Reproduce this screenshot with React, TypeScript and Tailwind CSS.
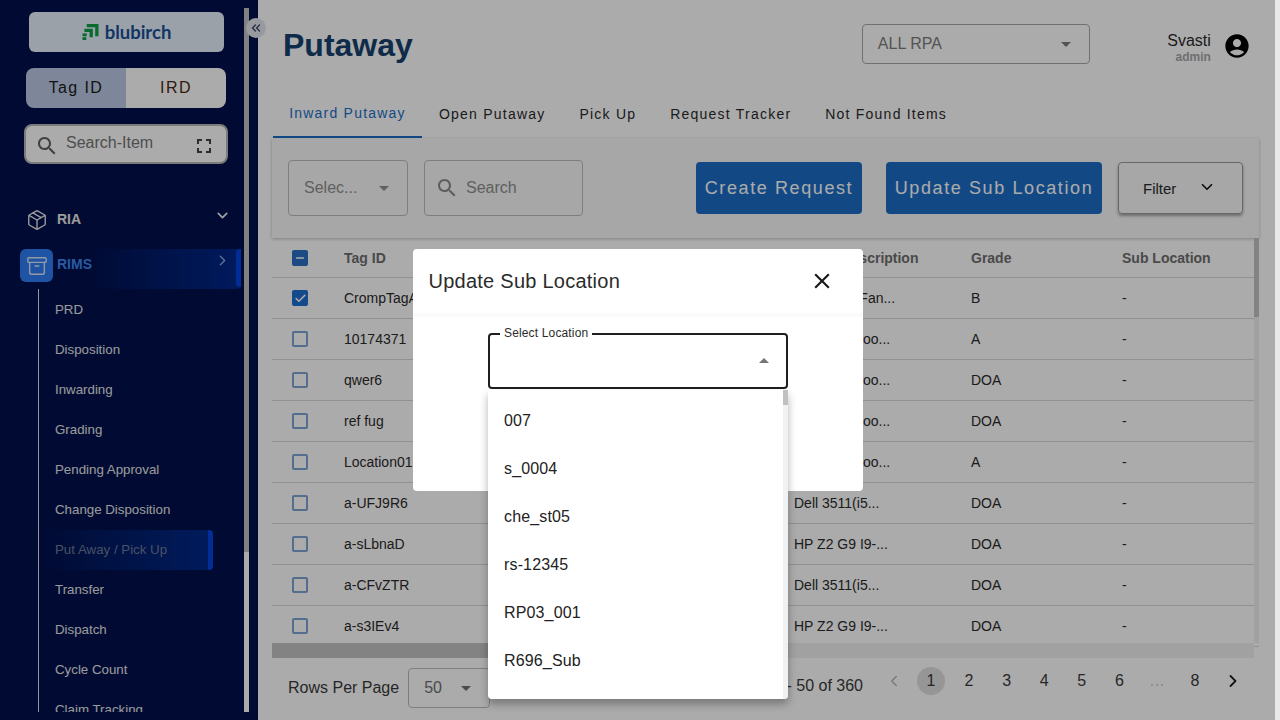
import React from "react";
import { Package, Archive, ChevronDown, ChevronRight, ChevronLeft, ChevronsLeft, Check, Minus } from "lucide-react";

const subs = ["PRD", "Disposition", "Inwarding", "Grading", "Pending Approval", "Change Disposition", "Put Away / Pick Up", "Transfer", "Dispatch", "Cycle Count", "Claim Tracking"];
const rows = [
  ["CrompTagA01", "Crompton Fan...", "B", true],
  ["10174371", "Wooden Stoo...", "A", false],
  ["qwer6", "Wooden Stoo...", "DOA", false],
  ["ref fug", "Wooden Stoo...", "DOA", false],
  ["Location01", "Wooden Stoo...", "A", false],
  ["a-UFJ9R6", "Dell 3511(i5...", "DOA", false],
  ["a-sLbnaD", "HP Z2 G9 I9-...", "DOA", false],
  ["a-CFvZTR", "Dell 3511(i5...", "DOA", false],
  ["a-s3IEv4", "HP Z2 G9 I9-...", "DOA", false],
] as const;
const tabs = ["Inward Putaway", "Open Putaway", "Pick Up", "Request Tracker", "Not Found Items"];
const options = ["007", "s_0004", "che_st05", "rs-12345", "RP03_001", "R696_Sub"];

function Caret({ up = false }: { up?: boolean }) {
  return (
    <svg width="24" height="24" viewBox="0 0 24 24" className="shrink-0" fill="currentColor">
      <path d={up ? "M7 14l5-5 5 5z" : "M7 10l5 5 5-5z"} />
    </svg>
  );
}

function SearchIcon({ className }: { className: string }) {
  return (
    <svg width="24" height="24" viewBox="0 0 24 24" className={className} fill="currentColor">
      <path d="M15.5 14h-.79l-.28-.27C15.41 12.59 16 11.11 16 9.5 16 5.91 13.09 3 9.5 3S3 5.91 3 9.5 5.91 16 9.5 16c1.61 0 3.09-.59 4.23-1.57l.27.28v.79l5 4.99L20.49 19l-4.99-5zm-6 0C7.01 14 5 11.99 5 9.5S7.01 5 9.5 5 14 7.01 14 9.5 11.99 14 9.5 14z" />
    </svg>
  );
}

function Sidebar() {
  return (
    <aside className="w-[258px] h-full shrink-0 bg-[#00104d] relative flex">
      <div className="w-[244px] h-[712px] flex flex-col overflow-hidden">
        <div className="ml-[29px] mt-3 w-[195px] h-10 shrink-0 rounded-md bg-[#e6f1fb] flex items-center justify-center gap-[6px]">
          <svg width="17" height="16" viewBox="0 0 18 17" fill="#0d9e45">
            <path d="M5 0h12.5v13h-3.5V3.5H5z" />
            <path d="M2.5 5h9v9H8V8.5H2.5z" />
            <rect x="0.5" y="10" width="4.5" height="3" />
            <rect x="0.5" y="14" width="4" height="3" />
          </svg>
          <span className="font-['Lato',sans-serif] text-[18.5px] font-bold text-[#1a5096] leading-none">blubirch</span>
        </div>
        <div className="ml-[26px] mt-4 w-[200px] h-10 shrink-0 rounded-lg overflow-hidden flex text-base tracking-[1.4px]">
          <div className="w-[100px] bg-[#bccae6] text-[#1a1a1a] flex items-center justify-center">Tag ID</div>
          <div className="w-[100px] bg-white text-[#4a2a10] flex items-center justify-center">IRD</div>
        </div>
        <div className="ml-[24px] mt-4 w-[204px] h-10 shrink-0 rounded-lg bg-white border-2 border-[#b8b8b8] flex items-center pl-[9px] pr-[10px] text-[#757575]">
          <SearchIcon className="shrink-0 mt-[4px] text-[#5f5f5f]" />
          <span className="ml-[7px] text-base flex-1 -mt-[2px]">Search-Item</span>
          <svg width="24" height="24" viewBox="0 0 24 24" fill="#444" className="mt-[4px]">
            <path d="M7 14H5v5h5v-2H7v-3zm-2-4h2V7h3V5H5v5zm12 7h-3v2h5v-5h-2v3zM14 5v2h3v3h2V5h-5z" />
          </svg>
        </div>
        <div className="mt-[35px] pl-[20px] mr-[3px] flex flex-col shrink-0">
          <div className="h-10 flex items-center pl-[7px]">
            <Package size={22} strokeWidth={1.5} className="text-[#e8e8e8] -ml-[1px] -mr-[1px] mt-[1px]" />
            <span className="ml-[10px] text-sm font-bold text-[#e8e8e8] -mt-px">RIA</span>
            <ChevronDown size={17} strokeWidth={2.5} className="ml-auto mr-[10px] mb-[7px] text-[#e8e8e8]" />
          </div>
          <div className="mt-[10px] h-10 flex items-start relative bg-gradient-to-r from-transparent from-[30%] to-[#00288c] rounded-r">
            <div className="w-[33px] h-[33px] rounded-md bg-[#2f7df5] flex items-center justify-center">
              <Archive size={22} strokeWidth={1.5} className="text-[#dde6f5]" />
            </div>
            <span className="ml-1 text-sm font-bold leading-[31px] text-[#3f86f0]">RIMS</span>
            <ChevronRight size={17} strokeWidth={2} className="ml-auto mr-[10px] mt-[3px] text-[#8aa9e0]" />
            <div className="absolute right-0 top-0 bottom-[2px] w-[5px] rounded-l bg-[#0544e0]" />
          </div>
          <div className="ml-[18px] pt-[1px] border-l border-[#e0e0e0] flex flex-col">
            {subs.map((s) => (
              <div key={s} className="h-10 pl-4 flex items-center text-[13.3px] relative">
                {s === "Put Away / Pick Up" ? (
                  <>
                    <div className="absolute left-[2px] top-0 w-[171px] h-10 rounded-r bg-gradient-to-r from-transparent to-[#002a8a]" />
                    <div className="absolute left-[169px] top-0 w-[5px] h-10 rounded-r bg-[#0544e0]" />
                    <span className="relative text-[#6f7a96]">{s}</span>
                  </>
                ) : (
                  <span className="text-[#e6e6e6]">{s}</span>
                )}
              </div>
            ))}
          </div>
        </div>
      </div>
      <div className="w-[5px] h-[704px] mt-2 bg-white">
        <div className="w-full h-[544px] bg-[#c0c0c0]" />
      </div>
      <div className="absolute left-[246px] top-[18px] w-[20px] h-[20px] rounded-full bg-[#e3e6ee] flex items-center justify-center">
        <ChevronsLeft size={14} strokeWidth={2.5} className="text-[#43506b]" />
      </div>
    </aside>
  );
}

function Table() {
  return (
    <div className="ml-[14px] mr-[16px] h-[421px] shrink-0 flex flex-col relative overflow-hidden">
      <div className="h-10 shrink-0 flex items-center border-b border-[#d9d9d9] text-sm font-bold text-[#6e6e6e]">
        <div className="w-[72px] pl-5 shrink-0">
          <div className="w-4 h-4 rounded-[2px] bg-[#2a6fc4] flex items-center justify-center">
            <Minus size={12} strokeWidth={3} className="text-white" />
          </div>
        </div>
        <div className="w-[450px] shrink-0">Tag ID</div>
        <div className="w-[177px] shrink-0">Article Description</div>
        <div className="w-[151px] shrink-0">Grade</div>
        <div>Sub Location</div>
      </div>
      {rows.map(([tag, desc, grade, checked]) => (
        <div key={tag} className="h-[41px] shrink-0 flex items-center border-b border-[#d9d9d9] text-sm text-[#2b2b2b]">
          <div className="w-[72px] pl-5 shrink-0">
            {checked ? (
              <div className="w-4 h-4 rounded-[2px] bg-[#1c6fd0] flex items-center justify-center">
                <Check size={13} strokeWidth={3} className="text-white" />
              </div>
            ) : (
              <div className="w-4 h-4 rounded-[2px] border-2 border-[#7ba3d4]" />
            )}
          </div>
          <div className="w-[450px] shrink-0">{tag}</div>
          <div className="w-[177px] shrink-0">{desc}</div>
          <div className="w-[151px] shrink-0">{grade}</div>
          <div>-</div>
        </div>
      ))}
      <div className="absolute left-0 right-[5px] bottom-[1px] h-[15px] bg-[#f1f1f1]">
        <div className="w-[500px] h-full bg-[#c4c4c4]" />
      </div>
      <div className="absolute right-0 top-0 h-[405px] w-[5px] bg-[#f1f1f1]">
        <div className="w-full h-[79px] bg-[#c4c4c4]" />
      </div>
    </div>
  );
}

function Main() {
  return (
    <main className="flex-1 min-w-0 h-full flex flex-col bg-white">
      <header className="h-[89px] shrink-0 flex items-start">
        <h1 className="ml-[25px] mt-[25px] text-[32px] leading-10 font-bold text-[#17416f]">Putaway</h1>
        <div className="ml-[449px] mt-[24px] w-[228px] h-10 rounded border border-[#a8a8a8] flex items-center pl-[15px] pr-[11px] text-base text-[#7c7c7c]">
          <span className="flex-1 -mt-[1px]">ALL RPA</span>
          <Caret />
        </div>
        <div className="ml-[77px] mt-[33px] w-[44px] text-right">
          <div className="text-base leading-4 text-[#2b2b2b] whitespace-nowrap">Svasti</div>
          <div className="text-xs leading-3 font-bold text-[#a6a6a6] mt-[2px]">admin</div>
        </div>
        <svg width="28" height="28" viewBox="0 0 24 24" className="ml-[12px] mt-[32px]" fill="#000">
          <path d="M12 2C6.48 2 2 6.48 2 12s4.48 10 10 10 10-4.48 10-10S17.52 2 12 2zm0 4c1.93 0 3.5 1.57 3.5 3.5S13.93 13 12 13s-3.5-1.57-3.5-3.5S10.07 6 12 6zm0 14c-2.03 0-4.43-.82-6.14-2.88C7.55 15.8 9.68 15 12 15s4.45.8 6.14 2.12C16.43 19.18 14.03 20 12 20z" />
        </svg>
      </header>
      <nav className="h-[49px] ml-[15px] flex items-stretch shrink-0 text-sm tracking-[1.22px] text-[#2b2b2b]">
        {tabs.map((t, i) => (
          <div key={t} className={i === 0 ? "w-[149px] flex items-center justify-center pt-[1px] text-[#1c6fc8] border-b-2 border-[#1c6fc8]" : "pl-[17px] pr-[17px] flex items-center pt-[1px]"}>
            {t}
          </div>
        ))}
      </nav>
      <section className="ml-[14px] mr-[16px] h-[100px] shrink-0 bg-[#f9f9f9] shadow-[0_1px_3px_rgba(0,0,0,0.25)] flex items-center pl-4 pr-4">
        <div className="w-[120px] h-14 rounded border border-[#bdbdbd] flex items-center pl-[15px] pr-[11px] text-base text-[#8f8f8f]">
          <span className="flex-1">Selec...</span>
          <Caret />
        </div>
        <div className="ml-4 w-[159px] h-14 rounded border border-[#bdbdbd] flex items-center pl-[10px] text-base text-[#8f8f8f]">
          <SearchIcon className="text-[#8a8a8a]" />
          <span className="ml-[7px]">Search</span>
        </div>
        <button className="ml-[113px] w-[166px] h-[52px] rounded bg-[#1c6ec7] text-white text-lg font-medium tracking-[1.6px]">Create Request</button>
        <button className="ml-6 w-[216px] h-[52px] rounded bg-[#1c6ec7] text-white text-lg font-medium tracking-[1.6px]">Update Sub Location</button>
        <button className="ml-4 w-[125px] h-[52px] rounded border border-[#9a9a9a] shadow-[0_2px_3px_rgba(0,0,0,0.35)] flex items-center pl-[24px] text-[15px] text-[#2b2b2b]">
          <span className="pt-[2px]">Filter</span>
          <ChevronDown size={18} strokeWidth={2.2} className="ml-[22px] -mt-[3px] text-[#111]" />
        </button>
      </section>
      <Table />
      <footer className="flex-1 ml-[30px] mr-[16px] flex items-start text-base text-[#3a3a3a]">
        <div className="flex items-center mt-[9px]">
          <span>Rows Per Page</span>
          <div className="ml-[9px] w-[82px] h-10 rounded border border-[#bdbdbd] flex items-center pl-[15px] pr-[11px] text-[#707070]">
            <span className="flex-1">50</span>
            <Caret />
          </div>
        </div>
        <span className="ml-[283px] mt-[15px] whitespace-nowrap">1 - 50 of 360</span>
        <div className="ml-[22px] mt-[8px] flex items-center">
          {[1, 2, 3, 4, 5, 6].map((n, i) => (
            <React.Fragment key={n}>
              {i === 0 && <ChevronLeft size={18} className="text-[#b5b5b5] mr-[14px]" />}
              <div className={n === 1 ? "w-7 h-7 rounded-full bg-[#e0e0e0] flex items-center justify-center mr-[10px]" : "w-7 flex items-center justify-center mr-[9.6px]"}>{n}</div>
            </React.Fragment>
          ))}
          <div className="w-7 flex items-center justify-center mr-[10px] text-[#c8c8c8]">…</div>
          <div className="w-7 flex items-center justify-center mr-[14px]">8</div>
          <ChevronRight size={20} strokeWidth={2.2} className="text-[#222]" />
        </div>
      </footer>
    </main>
  );
}

export default function App() {
  return (
    <div className="relative w-[1280px] h-[720px] overflow-hidden flex font-['Liberation_Sans',Arial,sans-serif]">
      <Sidebar />
      <Main />
      <div className="w-[5px] h-full shrink-0 bg-[#e8e8e8]" />
      <div className="absolute left-0 top-0 bottom-0 right-[5px] bg-black/[0.33]" />
      <div className="absolute left-[413px] top-[249px] w-[450px] h-[242px] bg-white rounded">
        <div className="h-[68px] flex items-center justify-between pl-[15.5px] pr-[28px] border-b-4 border-[#fafafa]">
          <span className="text-xl tracking-[0.25px] text-[#2b2b2b]">Update Sub Location</span>
          <svg width="26" height="26" viewBox="0 0 24 24" fill="#1a1a1a">
            <path d="M19 6.41 17.59 5 12 10.59 6.41 5 5 6.41 10.59 12 5 17.59 6.41 19 12 13.41 17.59 19 19 17.59 13.41 12z" />
          </svg>
        </div>
        <div className="relative ml-[75px] mt-[16px] w-[300px] h-[56px] rounded border-2 border-[#1f1f1f] flex items-center justify-end pr-[10px] text-[#757575]">
          <span className="absolute left-[10px] -top-[9px] bg-white px-[4px] text-xs tracking-[0.15px] leading-[14px] text-[#2b2b2b]">Select Location</span>
          <Caret up />
        </div>
      </div>
      <div className="absolute left-[488px] top-[390px] w-[300px] h-[309px] bg-white rounded-b shadow-[0_5px_8px_rgba(0,0,0,0.3)] flex overflow-hidden">
        <ul className="flex-1 pt-[7px]">
          {options.map((o) => (
            <li key={o} className="h-12 pl-4 flex items-center text-base tracking-[0.15px] text-[#222]">{o}</li>
          ))}
        </ul>
        <div className="w-[5px] bg-[#f1f1f1]">
          <div className="h-[15px] bg-[#c1c1c1]" />
        </div>
      </div>
    </div>
  );
}
